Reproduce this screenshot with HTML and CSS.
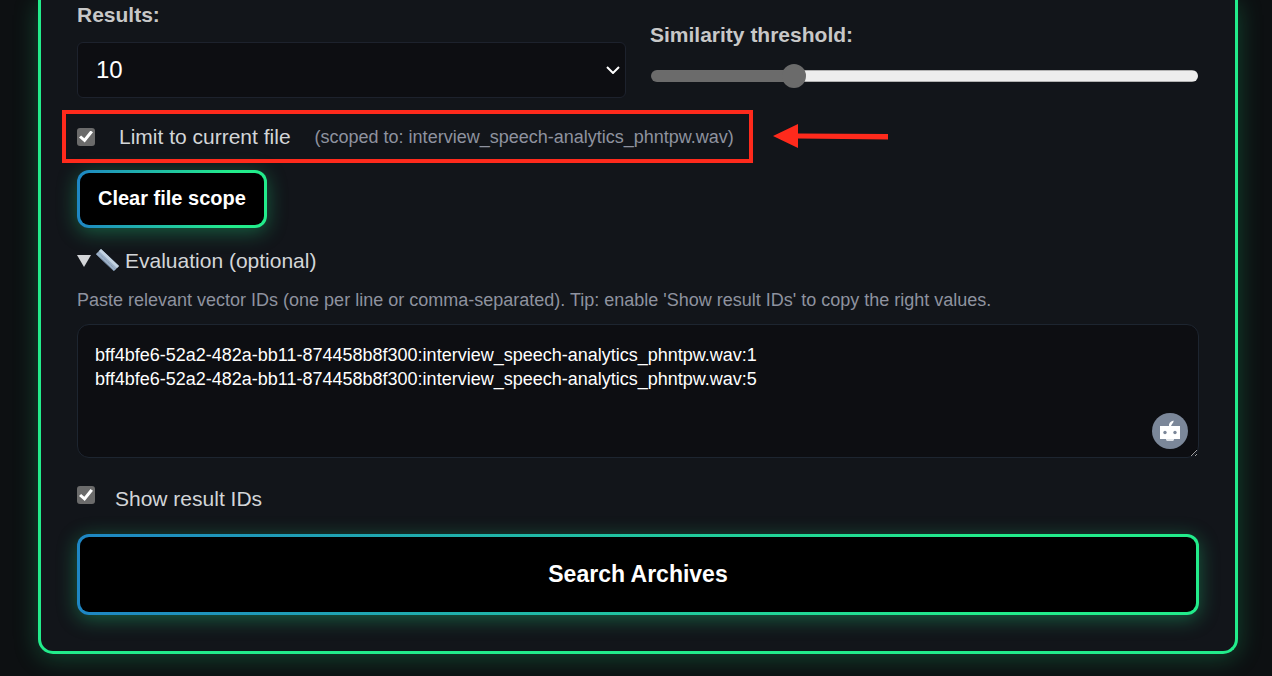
FILE: index.html
```html
<!DOCTYPE html>
<html lang="en">
<head>
  <meta charset="UTF-8" />
  <meta name="viewport" content="width=device-width, initial-scale=1.0"/>
  <title>Search Archives</title>
  <link rel="stylesheet" href="styles.css">
</head>
<body>
  <form class="card">
    <div class="options">
      <div class="option">
        <label class="field-label" for="results">Results:</label>
        <div class="select-wrapper">
          <select id="results" name="results">
            <option>5</option>
            <option selected>10</option>
            <option>20</option>
          </select>
          <svg class="chevron" viewBox="0 0 14 8" aria-hidden="true">
            <path d="M1 1l6 6 6-6" fill="none" stroke="#fff" stroke-width="2"/>
          </svg>
        </div>
      </div>
      <div class="option option-slider">
        <label class="field-label" for="threshold">Similarity threshold:</label>
        <input type="range" id="threshold" name="threshold" min="0" max="1" step="0.05" value="0.25" />
      </div>
    </div>

    <div class="scope-row">
      <input type="checkbox" id="limit" name="limit" checked />
      <label for="limit">Limit to current file</label>
      <span class="scope-name">(scoped to: interview_speech-analytics_phntpw.wav)</span>
      <svg class="arrow" viewBox="0 0 116 28" aria-hidden="true">
        <path d="M0 14L25 2v9.500L115 12v5.500L25 16.500V26z" fill="#ff2a1c"/>
      </svg>
    </div>

    <button type="button" class="btn btn-small">Clear file scope</button>

    <details open>
      <summary>
        <svg class="marker" viewBox="0 0 14 12" aria-hidden="true"><path d="M0 0h14L7 12z" fill="#d3d5d8"/></svg>
        <svg class="ruler" viewBox="0 0 24 24" aria-hidden="true">
          <path d="M5 0L23 17l-5 5L0 5z" fill="#9db1c8"/>
          <path d="M5 0L23 17l-2 2L3 2z" fill="#c3d3e2"/>
          <path d="M2 3.500L19.500 20.500" stroke="#7e92aa" stroke-width="1" stroke-dasharray="1 1"/>
          <path d="M0 5l18 17" stroke="#72869e" stroke-width="1"/>
        </svg>
        <span>Evaluation (optional)</span>
      </summary>
      <label class="hint" for="ids">Paste relevant vector IDs (one per line or comma-separated). Tip: enable 'Show result IDs' to copy the right values.</label>
      <div class="ids-wrapper">
        <textarea id="ids" name="ids" spellcheck="false">bff4bfe6-52a2-482a-bb11-874458b8f300:interview_speech-analytics_phntpw.wav:1
bff4bfe6-52a2-482a-bb11-874458b8f300:interview_speech-analytics_phntpw.wav:5</textarea>
        <button type="button" class="bot" aria-label="Assistant">
          <svg viewBox="0 0 36 36" aria-hidden="true">
            <path d="M17 13.500c-.5-3 1-5 4.500-6c.5 2.500-2 3-2.500 6z" fill="#fff"/>
            <path d="M8 13h20v13H8z" fill="#fff"/>
            <circle cx="13" cy="19.500" r="1.700" fill="#7b8799"/>
            <circle cx="23" cy="19.500" r="1.700" fill="#7b8799"/>
            <path d="M14 26h8v1l-1 1h-6l-1-1z" fill="#dfe3e8"/>
          </svg>
        </button>
      </div>
      <div class="show-row">
        <input type="checkbox" id="show" name="show" checked />
        <label for="show">Show result IDs</label>
      </div>
    </details>

    <button type="submit" class="btn btn-large">Search Archives</button>
  </form>
</body>
</html>
```

FILE: styles.css
```css
* {
  box-sizing: border-box;
}

body {
  margin: 0;
  padding: 0 34px 22px 38px;
  background: #0d1012;
  color: #d3d5d8;
  font-family: "Liberation Sans", Arial, sans-serif;
  font-size: 21px;
  line-height: 26px;
}

.card {
  padding: 2px 36px 36px;
  background: #12151a;
  border: 3px solid #22ec8b;
  border-top: none;
  border-radius: 0 0 15px 15px;
  box-shadow: 0 4px 24px rgba(34, 236, 139, 0.25);
}

.options {
  display: grid;
  grid-template-columns: 1fr 1fr;
  gap: 24px;
}

.option {
  display: flex;
  flex-direction: column;
  gap: 14px;
}

.option-slider {
  justify-content: flex-end;
  gap: 16px;
  padding-bottom: 10px;
}

.field-label {
  color: #c8c8c8;
  font-weight: bold;
}

.select-wrapper {
  position: relative;
}

select {
  width: 100%;
  height: 56px;
  padding: 0 18px 2px;
  appearance: none;
  background: #0d0e12;
  border: 1px solid #1d222d;
  border-radius: 6px;
  color: #fff;
  font-family: inherit;
  font-size: 24px;
}

.chevron {
  position: absolute;
  right: 6px;
  top: 24px;
  width: 14px;
  height: 8px;
  pointer-events: none;
}

input[type="range"] {
  height: 24px;
  margin: 0 1px;
  appearance: none;
  background: transparent;
}

input[type="range"]::-webkit-slider-runnable-track {
  height: 12px;
  background: linear-gradient(to right, #6b6b6b 26%, transparent 26%),
    linear-gradient(#b2b2b2 1px, #ededed 1px, #ededed 11px, #b2b2b2 11px);
  border-radius: 6px;
}

input[type="range"]::-webkit-slider-thumb {
  width: 24px;
  height: 24px;
  margin-top: -6px;
  appearance: none;
  background: #6b6b6b;
  border-radius: 50%;
}

input[type="checkbox"] {
  display: grid;
  place-content: center;
  width: 18px;
  height: 18px;
  margin: 0;
  appearance: none;
  background: #6b6b6b;
  border-radius: 3px;
}

input[type="checkbox"]:checked::before {
  content: "";
  width: 14px;
  height: 12px;
  background: #fff;
  clip-path: polygon(0 58%, 15% 42%, 38% 65%, 82% 0, 100% 14%, 41% 100%);
}

/* highlighted row, the frame sticks out left of the form column */
.scope-row {
  position: relative;
  display: flex;
  align-items: center;
  gap: 24px;
  width: fit-content;
  height: 53px;
  margin: 12px 0 7px -15px;
  padding: 0 15px 0 11px;
  border: 4px solid #ff2a1c;
}

.scope-name {
  color: #8e929f;
  font-size: 18px;
}

.arrow {
  position: absolute;
  left: 100%;
  top: 8px;
  width: 116px;
  height: 28px;
  margin-left: 24px;
}

.btn {
  display: block;
  background: linear-gradient(#000, #000) padding-box,
    linear-gradient(to right, #1e86c4, #22ec8b 80%) border-box;
  border: 3px solid transparent;
  border-radius: 12px;
  box-shadow: 0 4px 20px rgba(34, 236, 139, 0.35);
  color: #fff;
  font-family: inherit;
  font-weight: bold;
  cursor: pointer;
}

.btn-small {
  height: 58px;
  padding: 0 18px 2px;
  font-size: 20px;
}

.btn-large {
  width: 100%;
  height: 81px;
  font-size: 23px;
}

details {
  margin: 20px 0 22px;
}

summary {
  display: flex;
  align-items: center;
  gap: 5px;
  list-style: none;
  cursor: pointer;
}

.marker {
  width: 14px;
  height: 12px;
}

.ruler {
  width: 24px;
  height: 24px;
}

.hint {
  display: block;
  margin: 13px 0 11px;
  color: #8e929f;
  font-size: 18px;
}

.ids-wrapper {
  position: relative;
}

textarea {
  display: block;
  width: 100%;
  height: 134px;
  padding: 18px 17px;
  background: #0d0e12;
  border: 1px solid #1d2530;
  border-radius: 12px;
  color: #fff;
  font-family: inherit;
  font-size: 18px;
  line-height: 24px;
  resize: vertical;
}

.bot {
  position: absolute;
  right: 11px;
  bottom: 9px;
  width: 36px;
  height: 36px;
  padding: 0;
  background: #7b8799;
  border: none;
  border-radius: 50%;
  cursor: pointer;
}

.bot svg {
  display: block;
}

.show-row {
  display: flex;
  align-items: flex-start;
  gap: 20px;
  margin-top: 28px;
}
```
